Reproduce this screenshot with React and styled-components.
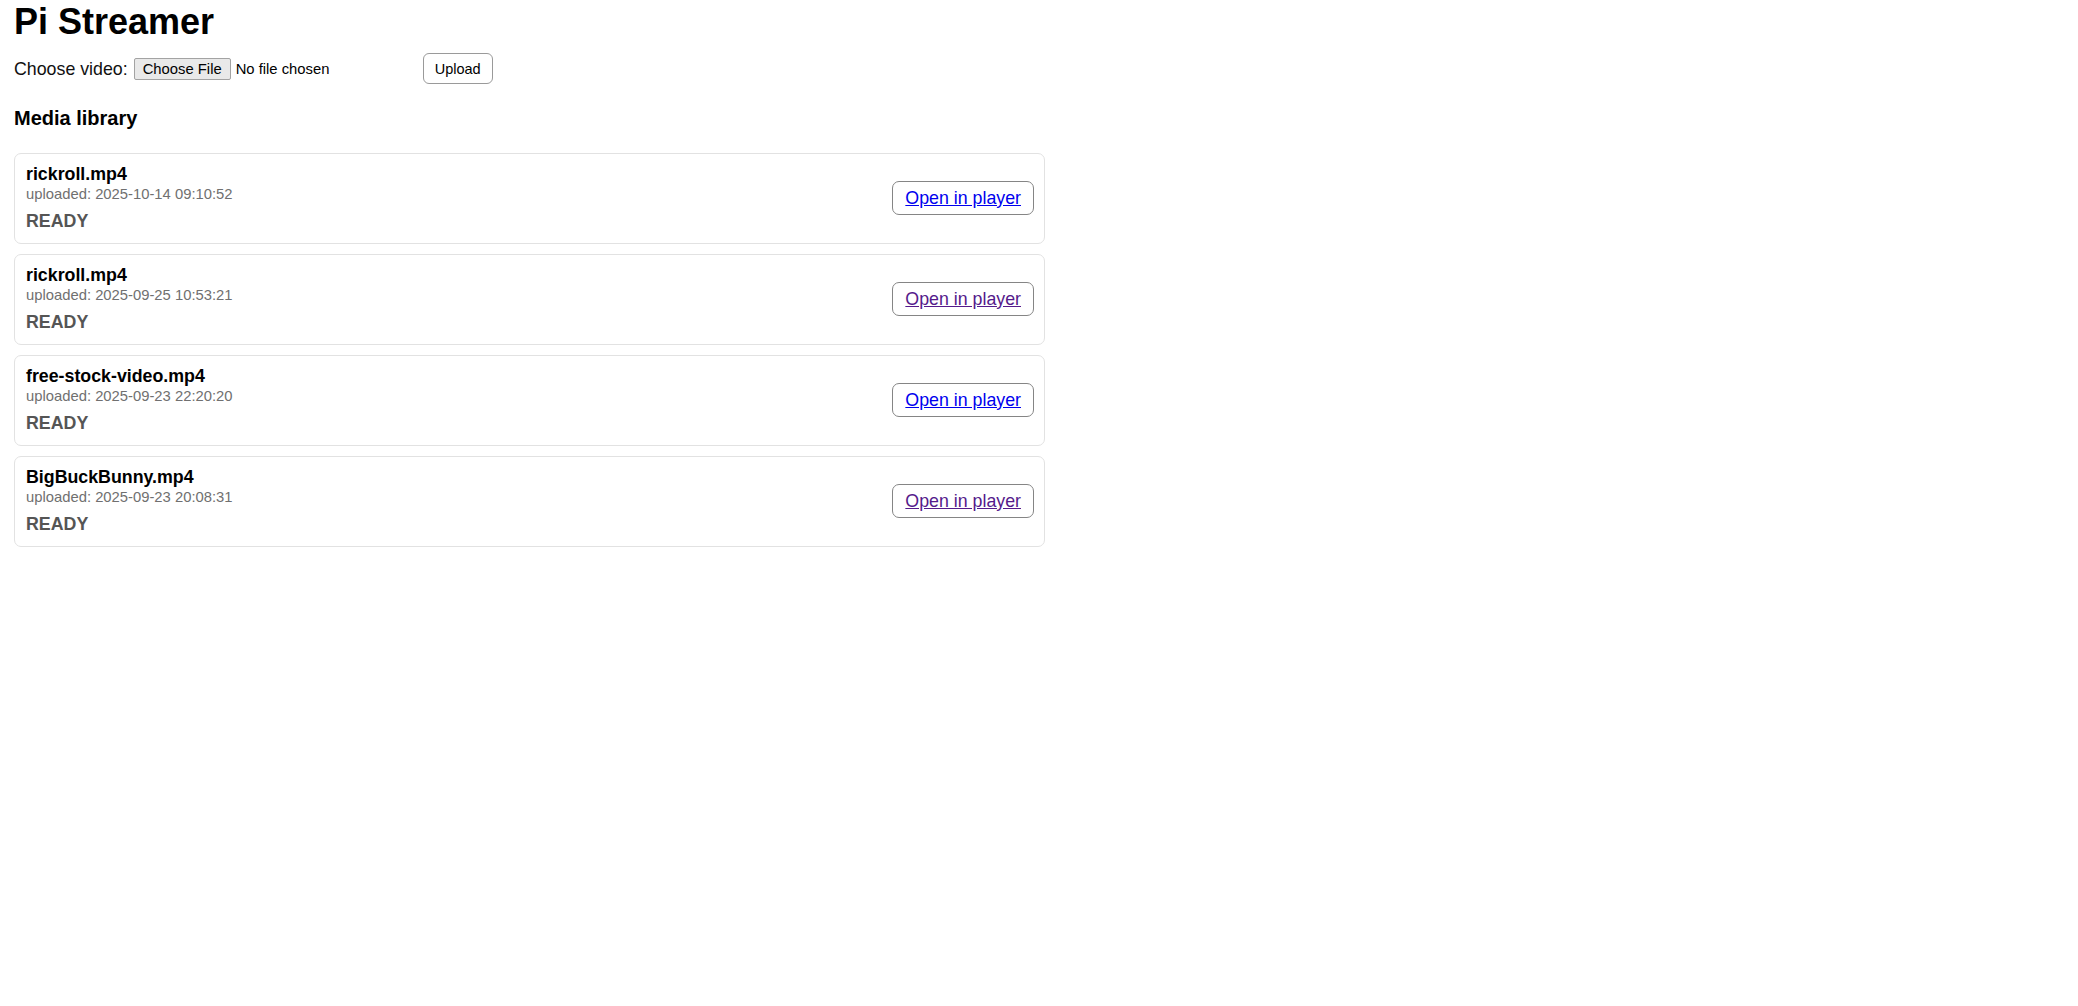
import React from "react";
import styled, { createGlobalStyle } from "styled-components";

const GlobalStyle = createGlobalStyle`
  body {
    margin: 0;
    background: #fff;
    color: #000;
    font-family: "Liberation Sans", Arial, sans-serif;
  }
`;

const Page = styled.main`
  padding: 2px 0 0 14px;
`;

const Title = styled.h1`
  margin: 0;
  font-size: 36px;
  line-height: 40px;
  font-weight: bold;
`;

const UploadForm = styled.form`
  display: flex;
  align-items: center;
  height: 31px;
  margin-top: 11px;
`;

const FieldLabel = styled.label`
  font-size: 17.8px;
  line-height: 20px;
  margin-right: 6px;
  color: #111;
`;

const FilePicker = styled.label`
  display: inline-flex;
  align-items: center;
  gap: 5px;
  width: 281px;
  font-size: 14.8px;
  cursor: pointer;

  input {
    display: none;
  }
`;

const FileButton = styled.span`
  display: inline-flex;
  align-items: center;
  height: 22px;
  box-sizing: border-box;
  padding: 0 8px;
  background: #e9e9e9;
  border: 1px solid #a3a3a3;
  border-radius: 2px;
  color: #000;
`;

const FileName = styled.span`
  color: #000;
`;

const UploadButton = styled.button`
  margin-left: 8px;
  height: 31px;
  box-sizing: border-box;
  padding: 0 11px;
  background: #fff;
  border: 1px solid #9a9a9a;
  border-radius: 6px;
  font-family: inherit;
  font-size: 14.5px;
  color: #000;
  cursor: pointer;
`;

const SectionTitle = styled.h2`
  margin: 23px 0 23px;
  font-size: 20px;
  line-height: 23px;
  font-weight: bold;
`;

const MediaList = styled.div`
  display: flex;
  flex-direction: column;
  gap: 10px;
  width: 1031px;
`;

const MediaCard = styled.div`
  display: flex;
  align-items: center;
  justify-content: space-between;
  padding: 10px 10px 12px 11px;
  border: 1px solid #e2e2e2;
  border-radius: 7px;
`;

const Info = styled.div`
  display: flex;
  flex-direction: column;
`;

const FileTitle = styled.div`
  font-size: 17.8px;
  line-height: 20px;
  font-weight: bold;
  color: #000;
`;

const Uploaded = styled.div`
  margin-top: 2px;
  font-size: 14.8px;
  line-height: 17px;
  color: #707070;
`;

const Status = styled.div`
  margin-top: 8px;
  font-size: 17.8px;
  line-height: 20px;
  font-weight: bold;
  color: #555;
`;

const OpenLink = styled.a`
  display: inline-block;
  padding: 6px 12px;
  border: 1px solid #858585;
  border-radius: 7px;
  font-size: 17.8px;
  line-height: 20px;
  color: ${({ $visited }) => ($visited ? "#551a8b" : "#0000ee")};
  text-decoration: underline;
`;

const media = [
  { name: "rickroll.mp4", uploaded: "2025-10-14 09:10:52", visited: false },
  { name: "rickroll.mp4", uploaded: "2025-09-25 10:53:21", visited: true },
  { name: "free-stock-video.mp4", uploaded: "2025-09-23 22:20:20", visited: false },
  { name: "BigBuckBunny.mp4", uploaded: "2025-09-23 20:08:31", visited: true },
];

export default function App() {
  return (
    <>
      <GlobalStyle />
      <Page>
        <Title>Pi Streamer</Title>
        <UploadForm onSubmit={(e) => e.preventDefault()}>
          <FieldLabel htmlFor="video">Choose video:</FieldLabel>
          <FilePicker>
            <input id="video" type="file" accept="video/*" />
            <FileButton>Choose File</FileButton>
            <FileName>No file chosen</FileName>
          </FilePicker>
          <UploadButton type="submit">Upload</UploadButton>
        </UploadForm>

        <SectionTitle>Media library</SectionTitle>
        <MediaList>
          {media.map((item, i) => (
            <MediaCard key={i}>
              <Info>
                <FileTitle>{item.name}</FileTitle>
                <Uploaded>uploaded: {item.uploaded}</Uploaded>
                <Status>READY</Status>
              </Info>
              <OpenLink href="#" $visited={item.visited}>
                Open in player
              </OpenLink>
            </MediaCard>
          ))}
        </MediaList>
      </Page>
    </>
  );
}
